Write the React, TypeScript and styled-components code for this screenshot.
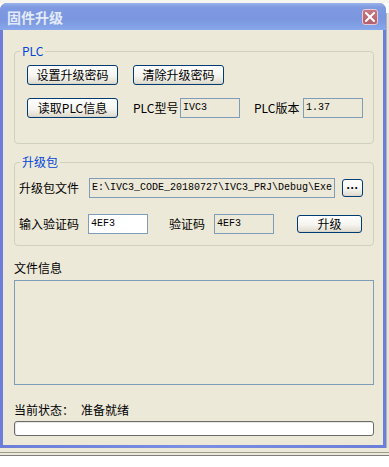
import React from "react";
import styled, { createGlobalStyle } from "styled-components";

const GlobalStyle = createGlobalStyle`
  body {
    margin: 0;
    background: #ffffff;
    font-family: "Noto Sans CJK SC", "Noto Sans", sans-serif;
    font-size: 12px;
    color: #000;
  }
`;

const Page = styled.div`
  width: 389px;
  height: 467px;
  display: flex;
  flex-direction: column;
  overflow: hidden;
`;

const TopStrip = styled.div`
  height: 3px;
  background: #f6f5f0;
`;

const Middle = styled.div`
  display: flex;
  height: 445px;
`;

const Window = styled.div`
  width: 386px;
  display: flex;
  flex-direction: column;
  background: linear-gradient(90deg, #6c7ed9, #7a8ee2 50%, #6c7ed9);
  border-radius: 7px 7px 0 0;
`;

const SideStrip = styled.div`
  width: 3px;
  margin-top: 10px;
  background: #e4e2da;
  border-left: 1px solid #b4b4b4;
  box-sizing: border-box;
`;

const TitleBar = styled.div`
  height: 27px;
  display: flex;
  align-items: center;
  padding: 0 8px 0 7px;
  border-radius: 7px 7px 0 0;
  background: linear-gradient(
    180deg,
    #9bb2ec 0%,
    #7f9ae1 15%,
    #7a96df 60%,
    #84a3e7 90%,
    #8aa9ea 100%
  );
`;

const Title = styled.span`
  flex: 1;
  font-size: 14px;
  font-weight: bold;
  color: #e3ebfa;
  line-height: 16px;
`;

const CloseButton = styled.div`
  width: 16px;
  height: 16px;
  box-sizing: border-box;
  border: 1px solid #e9c9cf;
  border-radius: 3px;
  background: linear-gradient(180deg, #c47682, #b5606e);
  display: flex;
  align-items: center;
  justify-content: center;
`;

const Client = styled.div`
  flex: 1;
  margin: 0 3px 3px 3px;
  background: #ece9d8;
  padding: 14px 9px 8px 11px;
  display: flex;
  flex-direction: column;
`;

const Group = styled.fieldset<{ $mt?: number }>`
  margin: ${(p) => p.$mt ?? 0}px 0 0 0;
  padding: 0;
  min-width: 0;
  border: 1px solid #d0d0bf;
  border-radius: 4px;
`;

const Legend = styled.legend`
  margin-left: 5px;
  padding: 0 2px;
  font-size: 12px;
  line-height: 14px;
  color: #0046d5;
`;

const GroupBody = styled.div<{ $pt: number; $pl: number; $pb: number; $gap: number }>`
  display: flex;
  flex-direction: column;
  padding: ${(p) => p.$pt}px 0 ${(p) => p.$pb}px ${(p) => p.$pl}px;
  gap: ${(p) => p.$gap}px;
`;

const Row = styled.div`
  display: flex;
  align-items: center;
  height: 20px;
`;

const Button = styled.button<{ $w: number; $h?: number; $ml?: number }>`
  width: ${(p) => p.$w}px;
  height: ${(p) => p.$h ?? 20}px;
  margin: 0 0 0 ${(p) => p.$ml ?? 0}px;
  padding: 0;
  box-sizing: border-box;
  border: 1px solid #003c74;
  border-radius: 3px;
  background: linear-gradient(180deg, #ffffff 0%, #f5f4ef 55%, #e3e0d4 90%, #d6d0c5 100%);
  font-family: "Noto Sans CJK SC", sans-serif;
  font-size: 12px;
  line-height: 14px;
  color: #000;
`;

const DotsButton = styled(Button)`
  font-family: "Liberation Sans", sans-serif;
  font-weight: bold;
  font-size: 12px;
  line-height: 12px;
  white-space: nowrap;
`;

const Label = styled.span<{ $w: number; $ml?: number }>`
  width: ${(p) => p.$w}px;
  margin-left: ${(p) => p.$ml ?? 0}px;
  flex-shrink: 0;
  line-height: 14px;
  white-space: nowrap;
`;

const Field = styled.div<{ $w: number; $white?: boolean }>`
  width: ${(p) => p.$w}px;
  height: 20px;
  flex-shrink: 0;
  box-sizing: border-box;
  border: 1px solid #7f9db9;
  background: ${(p) => (p.$white ? "#ffffff" : "#ece9d8")};
  padding-left: 2px;
  font-family: "Liberation Mono", monospace;
  font-size: 10px;
  line-height: 18px;
  white-space: nowrap;
  overflow: hidden;
`;

const SectionLabel = styled.div<{ $mt: number }>`
  margin-top: ${(p) => p.$mt}px;
  line-height: 14px;
`;

const InfoBox = styled.div`
  margin-top: 5px;
  height: 105px;
  box-sizing: border-box;
  border: 1px solid #7f9db9;
  background: #ece9d8;
`;

const StatusValue = styled.span`
  margin-left: 7px;
`;

const Progress = styled.div`
  margin-top: 4px;
  height: 15px;
  box-sizing: border-box;
  border: 1px solid #6a6a6a;
  border-radius: 3px;
  background: #ffffff;
  box-shadow: inset 1px 1px 0 #e8e8e8;
`;

const BottomBand = styled.div`
  display: flex;
  flex-direction: column;
`;

const Band = styled.div<{ $h: number; $c: string }>`
  height: ${(p) => p.$h}px;
  background: ${(p) => p.$c};
`;

const CloseIcon = () => (
  <svg width="10" height="10" viewBox="0 0 10 10">
    <path d="M1 1 L9 9 M9 1 L1 9" stroke="#ffffff" strokeWidth="2" strokeLinecap="square" />
  </svg>
);

export default function App() {
  return (
    <Page>
      <GlobalStyle />
      <TopStrip />
      <Middle>
        <Window>
          <TitleBar>
            <Title>固件升级</Title>
            <CloseButton>
              <CloseIcon />
            </CloseButton>
          </TitleBar>
          <Client>
            {/* PLC 分组 */}
            <Group>
              <Legend>PLC</Legend>
              <GroupBody $pt={7} $pl={12} $pb={25} $gap={13}>
                <Row>
                  <Button $w={91}>设置升级密码</Button>
                  <Button $w={91} $ml={15}>
                    清除升级密码
                  </Button>
                </Row>
                <Row>
                  <Button $w={91}>读取PLC信息</Button>
                  <Label $w={47} $ml={15}>
                    PLC型号
                  </Label>
                  <Field $w={60}>IVC3</Field>
                  <Label $w={49} $ml={14}>
                    PLC版本
                  </Label>
                  <Field $w={60}>1.37</Field>
                </Row>
              </GroupBody>
            </Group>

            {/* 升级包 分组 */}
            <Group $mt={11}>
              <Legend>升级包</Legend>
              <GroupBody $pt={9} $pl={4} $pb={11} $gap={16}>
                <Row>
                  <Label $w={70}>升级包文件</Label>
                  <Field $w={246}>E:\IVC3_CODE_20180727\IVC3_PRJ\Debug\Exe</Field>
                  <DotsButton $w={21} $h={18} $ml={7}>
                    ···
                  </DotsButton>
                </Row>
                <Row>
                  <Label $w={69}>输入验证码</Label>
                  <Field $w={60} $white>
                    4EF3
                  </Field>
                  <Label $w={45} $ml={21}>
                    验证码
                  </Label>
                  <Field $w={60}>4EF3</Field>
                  <Button $w={65} $h={18} $ml={23}>
                    升级
                  </Button>
                </Row>
              </GroupBody>
            </Group>

            <SectionLabel $mt={15}>文件信息</SectionLabel>
            <InfoBox />

            <SectionLabel $mt={18}>
              当前状态：<StatusValue>准备就绪</StatusValue>
            </SectionLabel>
            <Progress />
          </Client>
        </Window>
        <SideStrip />
      </Middle>
      <BottomBand>
        <Band $h={4} $c="#ece9d8" />
        <Band $h={1} $c="#9d9b8d" />
        <Band $h={2} $c="#ece9d8" />
        <Band $h={1} $c="#7d7d7d" />
      </BottomBand>
    </Page>
  );
}
